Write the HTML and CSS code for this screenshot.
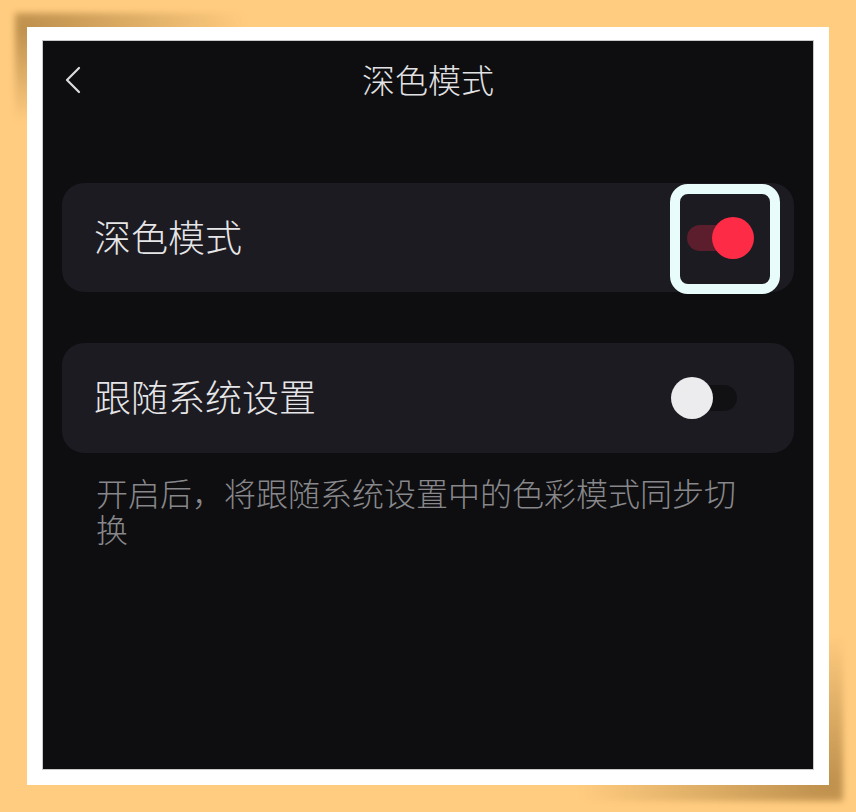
FILE: index.html
```html
<!DOCTYPE html>
<html lang="zh-CN">
<head>
<meta charset="utf-8">
<title>深色模式</title>
<link rel="stylesheet" href="styles.css">
</head>
<body>
<div class="frame">
  <div class="screen">
    <header class="header">
      <svg class="back" width="18" height="28" viewBox="0 0 18 28">
        <path d="M15 2 L3 14 L15 26" fill="none" stroke="#dcdcdc" stroke-width="2.2" stroke-linecap="round" stroke-linejoin="round"/>
      </svg>
      <h1 class="title">深色模式</h1>
    </header>
    <div class="card card-first">
      <span class="label">深色模式</span>
      <div class="toggle on">
        <span class="track"></span>
        <span class="knob"></span>
        <span class="highlight"></span>
      </div>
    </div>
    <div class="card card-second">
      <span class="label">跟随系统设置</span>
      <div class="toggle off">
        <span class="track"></span>
        <span class="knob"></span>
      </div>
    </div>
    <p class="desc">开启后，将跟随系统设置中的色彩模式同步切换</p>
  </div>
</div>
</body>
</html>
```
FILE: styles.css
```css
* { box-sizing: border-box; }
html, body { margin: 0; padding: 0; }
body {
  background: #ffcc80;
  width: 856px;
  height: 812px;
  overflow: hidden;
  font-family: "Noto Sans CJK SC", "Noto Sans", sans-serif;
}
.frame {
  position: relative;
  margin: 27px 0 0 27px;
  width: 802px;
  height: 758px;
  background: #ffffff;
  padding: 13px 15px 15px 15px;
}
.frame::before {
  content: "";
  position: absolute;
  z-index: -1;
  top: -14px;
  left: -12px;
  width: 260px;
  height: 140px;
  background: radial-gradient(ellipse 220px 95px at 12px 14px, rgba(125, 85, 25, 0.5), rgba(125, 85, 25, 0) 100%);
  filter: blur(3px);
}
.frame::after {
  content: "";
  position: absolute;
  z-index: -1;
  bottom: -16px;
  right: -14px;
  width: 280px;
  height: 200px;
  background: radial-gradient(ellipse 250px 150px at calc(100% - 14px) calc(100% - 16px), rgba(125, 85, 25, 0.5), rgba(125, 85, 25, 0) 100%);
  filter: blur(3px);
}
.screen {
  width: 772px;
  height: 730px;
  background: #0e0e10;
  border: 1px solid #c9c9c9;
  display: flex;
  flex-direction: column;
  padding: 0 19px;
}
.header {
  position: relative;
  height: 76px;
  display: flex;
  align-items: center;
  justify-content: center;
  margin: 0 -19px;
}
.back {
  position: absolute;
  left: 21px;
  top: 25px;
}
.title {
  margin: 0;
  font-size: 33px;
  font-weight: 300;
  color: #e2e2e4;
  line-height: 1;
  padding-top: 0;
}
.card {
  background: #1c1b21;
  border-radius: 22px;
  display: flex;
  align-items: center;
  justify-content: space-between;
  padding: 0 57px 0 32px;
}
.card-first {
  margin-top: 66px;
  height: 109px;
}
.card-second {
  margin-top: 51px;
  height: 110px;
}
.label {
  font-size: 37px;
  font-weight: 300;
  color: #e6e6e8;
  line-height: 1;
  margin-top: -3px;
}
.toggle {
  position: relative;
  width: 50px;
  height: 26px;
}
.track {
  position: absolute;
  inset: 0;
  border-radius: 13px;
}
.knob {
  position: absolute;
  top: -8px;
  width: 42px;
  height: 42px;
  border-radius: 50%;
}
.on .track { background: #5c1d2c; }
.on .knob { background: #fe2b46; right: -17px; }
.off .track { background: #111114; }
.off .knob { background: #ececee; left: -16px; }
.highlight {
  position: absolute;
  left: -17px;
  top: -41px;
  width: 110px;
  height: 110px;
  border: 10px solid #e8fcfc;
  border-radius: 18px;
}
.desc {
  margin: 21px 34px 0 34px;
  font-size: 32px;
  font-weight: 300;
  line-height: 36px;
  color: #88888c;
}
```
